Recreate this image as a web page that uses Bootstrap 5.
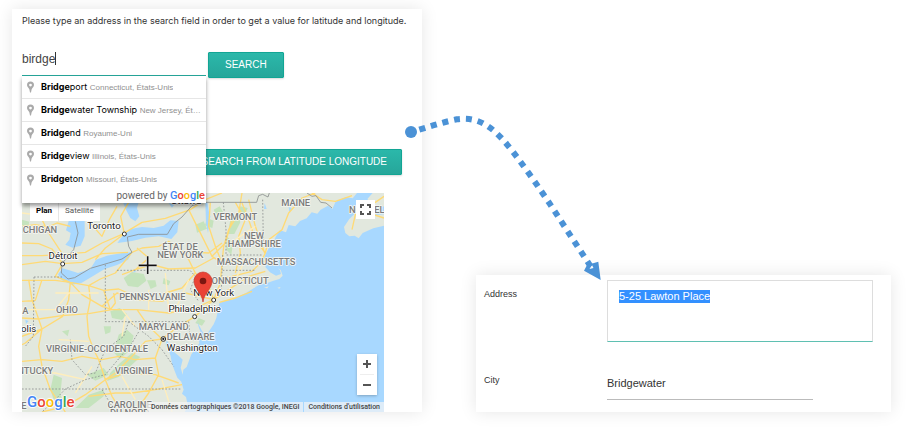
<!DOCTYPE html>
<html lang="en">
<head>
<meta charset="utf-8">
<meta name="viewport" content="width=device-width, initial-scale=1">
<title>Address search</title>
<link href="https://cdn.jsdelivr.net/npm/bootstrap@5.3.0/dist/css/bootstrap.min.css" rel="stylesheet">
<style>
  body { font-family: "Liberation Sans", Arial, sans-serif; font-size: 10px; line-height: 12px; color: #333; background: #fff; }
  .stage { display: grid; grid-template-columns: 410fr 415fr; column-gap: 54px; padding: 9px 29px 17px 12px; }
  .panel { min-width: 0; background: #fff; box-shadow: 0 0 16px rgba(0, 0, 0, .1); }
  .finder { padding: 6px 10px 0; }
  .hint { margin-bottom: 15px; font-family: Inter, sans-serif; font-size: 9px; white-space: nowrap; }
  .search-box { width: 184px; margin-bottom: 2px; }
  .search-input { width: 100%; height: 34px; border: 0; border-bottom: 1px solid #26a69a; border-radius: 0; padding: 0; outline: 0; font-size: 12px; color: #444;
    background: linear-gradient(#333, #333) 33px 10px / 1px 13px no-repeat; }
  .btn-teal { --bs-btn-color: #fff; --bs-btn-hover-color: #fff; --bs-btn-hover-bg: #26a69a; --bs-btn-border-color: #12a594; --bs-btn-border-radius: 1px;
    --bs-btn-font-size: 10px; --bs-btn-line-height: 14px; --bs-btn-padding-y: 5px; --bs-btn-padding-x: 16px;
    background: linear-gradient(#2bb8aa, #26a69a); box-shadow: 0 1px 2px rgba(0, 0, 0, .15); }
  .go { margin-left: 2px; }
  .from-coords { margin: 71px 10px 18px 0; --bs-btn-padding-x: 14px; }
  .suggest { position: absolute; z-index: 5; top: 100%; left: 0; right: 0; background: #fff; box-shadow: 0 3px 4px rgba(0, 0, 0, .4); }
  .suggest-item { height: 23px; padding: 0 4px; border-bottom: 1px solid #e6e6e6; font-family: Inter, sans-serif; font-size: 9px; line-height: 22px; color: #000; }
  .suggest-item:nth-child(5) { border-bottom: 0; }
  .suggest-item svg { width: 9px; height: 12px; margin-right: 6px; }
  .suggest-item small { font-family: "Liberation Sans", Arial, sans-serif; font-size: 8px; color: #909090; }
  .powered { height: 12px; line-height: 10px; padding-right: 1px; font-family: Roboto, sans-serif; color: #666; }
  .powered b { font-size: 11px; font-weight: 500; }
  .g-blue { color: #4285f4; } .g-red { color: #ea4335; } .g-yellow { color: #fbbc05; } .g-green { color: #34a853; }
  .map { margin-right: 28px; font-family: Roboto, sans-serif; overflow: hidden; }
  .map-canvas { display: block; width: 100%; height: 219px; }
  .map-btn { border: 0; background: #fff; color: #555; padding: 0; }
  .map-type { left: 8px; top: 8px; height: 20px; font-size: 8px; }
  .map-type .map-btn { padding: 0 6px; }
  .map-type .map-btn:first-child { font-weight: 700; color: #000; border-right: 1px solid #e6e6e6; }
  .map-full { right: 9px; top: 7px; width: 19px; height: 19px; }
  .map-zoom { right: 7px; bottom: 17px; width: 20px; background: #fff; border-radius: 1px; box-shadow: 0 1px 3px rgba(0, 0, 0, .25); }
  .map-zoom .map-btn { height: 20px; }
  .map-zoom hr { margin: 0 3px; color: #bbb; }
  .map-legal { right: 0; bottom: 0; height: 10px; font-size: 7px; font-weight: 500; line-height: 10px; white-space: nowrap; }
  .map-legal > * { background: rgba(245, 245, 245, .7); padding: 0 4px; color: #444; text-decoration: none; }
  .map-legal > a { margin-left: 1px; }
  .map-brand { left: 5px; bottom: 1px; font-size: 15px; font-weight: 500; line-height: 18px; text-shadow: 0 0 1px #fff, 1px 0 1px #fff, -1px 0 1px #fff, 0 1px 1px #fff, 0 -1px 1px #fff; }
  .record { padding: 5px 18px 12px 8px; font-size: 11px; }
  .field { display: grid; grid-template-columns: 123px 1fr; }
  .field label { font-size: 9px; padding-top: 8px; }
  .address { display: block; width: 100%; height: 62px; padding: 9px 11px; border: 1px solid #ddd; border-bottom-color: #5fc0b2; border-radius: 0; outline: 0; resize: none; line-height: 13px; color: #333; }
  .address::selection { background: #3390ff; color: #fff; }
  .city-row { margin-top: 24px; }
  .city { width: 206px; height: 34px; padding: 0; border: 0; border-bottom: 1px solid #bbb; border-radius: 0; outline: 0; color: #333; }
  .arrow { position: absolute; left: 0; top: 0; width: 920px; height: 429px; pointer-events: none; z-index: 6; }
</style>
</head>
<body>
<svg class="d-none" aria-hidden="true">
  <symbol id="pin" viewBox="0 0 9 12"><path fill="#aaa" fill-rule="evenodd" d="M4.500 .5A3.500 3.500 0 0 0 1 4c0 2 1.700 2.600 2.400 4.500L4 11.500h1l.6-3C6.300 6.600 8 6 8 4A3.500 3.500 0 0 0 4.500.5Zm0 2.200a1.400 1.400 0 1 1 0 2.800 1.400 1.400 0 0 1 0-2.800Z"/></symbol>
</svg>
<main class="stage position-relative">
  <section class="panel finder">
    <p class="hint"><label for="q">Please type an address in the search field in order to get a value for latitude and longitude.</label></p>
    <div class="d-flex align-items-end">
      <div class="search-box position-relative">
        <input class="search-input d-block" id="q" type="text" value="birdge" autocomplete="off">
        <div class="suggest">
          <div class="suggest-item d-flex align-items-center"><svg class="flex-shrink-0"><use href="#pin"/></svg><span class="text-truncate"><b>Bridge</b>port <small>Connecticut, États-Unis</small></span></div>
          <div class="suggest-item d-flex align-items-center"><svg class="flex-shrink-0"><use href="#pin"/></svg><span class="text-truncate"><b>Bridge</b>water Township <small>New Jersey, Ét…</small></span></div>
          <div class="suggest-item d-flex align-items-center"><svg class="flex-shrink-0"><use href="#pin"/></svg><span class="text-truncate"><b>Bridge</b>nd <small>Royaume-Uni</small></span></div>
          <div class="suggest-item d-flex align-items-center"><svg class="flex-shrink-0"><use href="#pin"/></svg><span class="text-truncate"><b>Bridge</b>view <small>Illinois, États-Unis</small></span></div>
          <div class="suggest-item d-flex align-items-center"><svg class="flex-shrink-0"><use href="#pin"/></svg><span class="text-truncate"><b>Bridge</b>ton <small>Missouri, États-Unis</small></span></div>
          <div class="powered text-end">powered by <b><span class="g-blue">G</span><span class="g-red">o</span><span class="g-yellow">o</span><span class="g-blue">g</span><span class="g-green">l</span><span class="g-red">e</span></b></div>
        </div>
      </div>
      <button class="btn btn-teal go" type="button">SEARCH</button>
    </div>
    <div class="d-flex justify-content-end"><button class="btn btn-teal from-coords" type="button">SEARCH FROM LATITUDE LONGITUDE</button></div>

    <div class="map position-relative">
      <svg class="map-canvas" viewBox="0 0 1086 657" preserveAspectRatio="xMidYMid slice" role="img" aria-label="Map">
        <rect width="1086" height="657" fill="#e2e8de"/>
        <!-- forests -->
        <g fill="#c5e3bd">
          <path d="M305 255l25-18 35 6 8 20-25 20-30-4zM375 262l25 0 4 18-18 8zM425 255l20 10-5 12-18-5zM265 355l28-10 22 18-15 18-30-6zM245 400l22 0-2 18-15 6zM290 425l25-15 20 18-12 45-30 25-18-20zM330 480l25 12-65 60-35 12 10-25 30-30zM195 545l50-20 15 20-40 18zM245 590l-45 15-40 40 40 0 45-35zM95 545l25 10-5 50 15 30-30 0-15-45zM120 415l22-5-5 20zM575 50l18-10 12 20-20 12zM520 95l25-10 10 22-30 12zM555 75l20 8-4 22-22-8zM655 40l22 5-10 25-18 0zM625 80l25-12 5 20-18 35-20 0zM615 130l18 20-5 35-15-15zM530 375l20 8-10 15-20-8zM0 80l22 6-4 18-18 0z"/>
        </g>
        <!-- ocean and lakes -->
        <g fill="#a8d8ff">
          <path d="M1086 0H1005L992 16 972 12 950 22 940 28 931 48 918 38 896 50 886 62 869 58 854 76 834 84 820 100 800 96 792 118 774 112 762 130 754 146 744 160 732 180 726 196 736 206 730 222 744 238 762 248 777 243 774 232 768 226 776 231 782 248 772 258 752 264 736 270 716 274 686 288 654 300 618 318 592 331 588 350 583 375 575 394 563 412 551 426 540 414 532 398 526 386 530 402 536 418 540 430 529 436 532 450 523 466 508 484 502 500 494 522 484 530 482 545 476 524 482 500 470 488 457 478 448 460 434 442 431 456 440 470 446 490 450 512 458 534 466 554 478 566 485 590 480 602 492 612 498 640 488 657H1086Z"/>
          <path d="M145 28L132 60 140 85 132 112 146 120 142 140 130 155 152 164 176 158 188 130 188 28ZM303 28L312 50 325 75 340 85 352 70 345 45 350 28ZM286 150L302 128 326 108 360 102 395 105 425 98 445 82 470 84 466 118 448 138 410 130 370 134 330 144ZM108 244L122 226 142 232 168 240 205 228 222 200 255 188 300 180 330 178 318 200 285 216 248 228 212 250 178 270 150 275 120 262ZM550 28L556 28 564 75 558 120 552 90Z"/>
          <path d="M440 30l18 4-8 10zM455 20l10 10-14 4zM560 60l6 12-8 8zM800 42l10 4-8 12zM728 30l6 18-8 0zM690 70l8 4-6 10zM10 380l10 4-8 8zM60 530l10 4-10 5zM335 230l8 4-8 5z"/>
        </g>
        <!-- islands and peninsulas -->
        <g fill="#e2e8de">
          <path d="M966 102L982 78 998 62 1008 50 1040 56 1062 66 1086 64V98L1054 106 1022 120 1010 136 998 128 982 130 970 120ZM1036 18L1052 0H1086V40L1062 48ZM592 324L620 306 660 292 704 280 672 300 630 320ZM726 284l14-4-4 6zM766 284l10-2-4 5z"/>
        </g>
        <!-- roads -->
        <g fill="none" stroke="#ffda75" stroke-width="4" stroke-linejoin="round">
          <path d="M0 150L50 152 90 168 122 212 100 250 145 268 200 278 245 292 290 288 345 312M0 188H60L122 184 190 178 240 150 300 124 360 88 430 76 505 50 550 20 600 0M0 215L70 205 122 212M122 212L180 208 240 182 318 178M30 28L60 80 80 120 122 184M60 110L105 90 145 100M0 100L40 95 70 100M200 85L240 130 262 80 285 40M307 122L296 70 320 28M307 122L250 165 220 200M330 178L360 165 410 160 440 145 480 175 560 180 600 150M200 278L235 258 280 240 330 178M340 230L390 215 440 228 520 225 575 195M345 165L380 195 340 230 300 245M0 262L60 262 100 262 145 268M0 325L40 322 60 260M0 375L50 378 120 368 200 362 270 350 345 350 440 360 520 345 575 320M145 268L140 320 122 370 60 408 0 430M145 268L180 305 240 340 270 350M200 278L205 320 195 370 200 430 215 470 230 500 250 560M60 408L30 320 20 260M60 408L50 460 60 520 85 590 130 657M60 408L10 450 0 455M0 505L60 500 120 505 180 490 240 500 290 490 340 500 400 495M240 340L285 300 340 320 420 325 490 300 575 320M245 292L265 350 280 330 275 300M345 350L380 400 420 438 400 495 410 545 380 600 340 657M420 438L470 400 520 370 575 320 620 290 680 250 730 235M420 438L370 445 330 490 280 540 250 560 190 605 130 640 60 657M250 560L270 610 300 657M250 560L310 540 400 545 470 570M200 610L280 600 330 600 400 590 480 575M575 320L560 280 520 240 500 200 480 175M575 320L595 270 600 210 580 160 560 100 565 28M600 210L670 200 730 205M600 210L570 190 530 110 500 50M640 28L670 80 650 130 655 180 640 240M660 0L650 60 620 110 605 160 600 210M730 180L715 210 690 235 630 250 580 260M730 180L740 140 780 110 800 60 840 15 880 0M730 180L700 140 680 80 660 30M680 20L700 100 728 180M520 240L480 285 430 300M570 190L610 150 630 80M1030 28L1060 28 1086 10M990 110L1000 65 1040 60 1086 75M870 0L900 20 940 25 990 8M592 328L640 315 690 295"/>
        </g>
        <path fill="none" stroke="#ffeebc" stroke-width="4" d="M0 60L80 70M0 350L100 350 140 300M100 300L230 300M0 540L100 540 190 560M340 400L300 350M380 290V350M430 240L440 350M310 370L300 430M500 260L460 350M110 440L200 445M210 520L160 600M300 550L340 620M420 560L450 657M670 200L640 260M700 100L640 140"/>
        <!-- borders -->
        <g fill="none" stroke="#8b8f8f" stroke-width="2.500">
          <path d="M160 85L168 120 155 170 120 212 118 240 138 258 158 254 205 226 260 210 300 198 330 178 320 160 316 132 350 124 436 124 455 92 480 72 510 38 540 28H704L710 8 722 4 738 12 742 0M855 0L870 10 882 8 896 28 912 30 930 45"/>
          <path stroke-dasharray="5 5" d="M36 252H120M36 252L34 430 10 460M250 215V386H500M285 232H504L520 250 505 290 530 325M604 28L612 110 612 186H720M722 20L724 150M602 186L598 290M602 232H700M320 386L305 430 250 470 220 540 190 545 150 500 145 440M320 386L380 430 420 470M360 400L330 450 250 545 190 560 130 588M0 588H480M500 386L505 440H525M130 588L100 620 60 657M420 470L455 520M240 590L280 657"/>
        </g>
        <!-- cities and regions -->
        <g font-size="28" font-weight="500" fill="#7b7b7b" stroke="#f4f6f2" stroke-width="5" paint-order="stroke" stroke-linejoin="round" text-anchor="middle">
          <text x="50" y="121">ICHIGAN</text><text x="474" y="171">ÉTAT DE</text><text x="475" y="196">NEW YORK</text>
          <text x="391" y="322">PENNSYLVANIE</text><text x="135" y="359">OHIO</text><text x="6" y="363">IA</text><text x="425" y="410">MARYLAND</text>
          <text x="506" y="442">DELAWARE</text><text x="225" y="476">VIRGINIE-OCCIDENTALE</text><text x="40" y="544">NTUCKY</text>
          <text x="335" y="544">VIRGINIE</text><text x="323" y="645">CAROLINE</text><text x="323" y="668">DU NORD</text><text x="6" y="648">E</text>
          <text x="640" y="82">VERMONT</text><text x="821" y="38">MAINE</text><text x="696" y="139">NEW</text><text x="697" y="163">HAMPSHIRE</text>
          <text x="702" y="216">MASSACHUSETTS</text><text x="645" y="273">CONNECTICUT</text><text x="1050" y="60">NOUVELLE</text>
        </g>
        <g font-size="29" fill="#222" stroke="#fff" stroke-width="5" paint-order="stroke" stroke-linejoin="round" text-anchor="middle">
          <text x="246" y="109">Toronto</text><text x="123" y="199">Détroit</text><text x="492" y="33">Ottawa</text><text x="575" y="309">New York</text>
          <text x="518" y="358">Philadelphie</text><text x="511" y="474">Washington</text><text x="20" y="417">olis</text>
        </g>
        <g fill="#fff" stroke="#333" stroke-width="3"><circle cx="307" cy="123" r="6"/><circle cx="122" cy="213" r="6"/><circle cx="575" cy="321" r="6"/><circle cx="518" cy="371" r="6"/><circle cx="424" cy="438" r="7"/></g>
        <circle cx="424" cy="438" r="3.500" fill="#222"/>
        <path d="M377 190V243M350 217H404" stroke="#fff" stroke-width="9"/>
        <path d="M377 190V243M350 217H404" stroke="#111" stroke-width="5"/>
        <path d="M543 327C540 300 516 288 516 264A27 27 0 0 1 570 264C570 288 546 300 543 327Z" fill="#ea4335" stroke="#c5352a" stroke-width="2"/><circle cx="543" cy="264" r="10" fill="#7b1710"/>
      </svg>
      <div class="map-type position-absolute d-flex"><button class="map-btn" type="button">Plan</button><button class="map-btn" type="button">Satellite</button></div>
      <button class="map-btn map-full position-absolute d-flex align-items-center justify-content-center" type="button" aria-label="Fullscreen"><svg width="13" height="13" viewBox="0 0 13 13" fill="none" stroke="#555" stroke-width="2"><path d="M2 5V2H5M8 2H11V5M11 8V11H8M5 11H2V8"/></svg></button>
      <div class="map-zoom position-absolute d-flex flex-column">
        <button class="map-btn d-flex align-items-center justify-content-center" type="button" aria-label="Zoom in"><svg width="8" height="8" viewBox="0 0 8 8" stroke="#555" stroke-width="2"><path d="M4 0V8M0 4H8"/></svg></button>
        <hr>
        <button class="map-btn d-flex align-items-center justify-content-center" type="button" aria-label="Zoom out"><svg width="8" height="8" viewBox="0 0 8 8" stroke="#555" stroke-width="2"><path d="M0 4H8"/></svg></button>
      </div>
      <div class="map-brand position-absolute"><span class="g-blue">G</span><span class="g-red">o</span><span class="g-yellow">o</span><span class="g-blue">g</span><span class="g-green">l</span><span class="g-red">e</span></div>
      <div class="map-legal position-absolute d-flex"><span>Données cartographiques ©2018 Google, INEGI</span><a href="#">Conditions d'utilisation</a></div>
    </div>
  </section>

  <section class="panel record align-self-end">
    <div class="field"><label for="address">Address</label><textarea class="address" id="address">5-25 Lawton Place</textarea></div>
    <div class="field city-row"><label for="city">City</label><input class="city" id="city" type="text" value="Bridgewater"></div>
  </section>

  <svg class="arrow" viewBox="0 0 920 429" aria-hidden="true">
    <circle cx="411" cy="132" r="6" fill="#4b92d6"/>
    <path d="M419.300 129.700Q445 121.500 457 119.300C477 116.500 491 125 507.700 145.300C520 160 540 189 549.700 203.700L591 267" fill="none" stroke="#4b92d6" stroke-width="6" stroke-dasharray="6 6"/>
    <path fill="#4b92d6" fill-rule="evenodd" d="M600.700 280L584 270.700 587 265 598.300 261.700ZM589.500 269l4-1-1.500-3z"/>
  </svg>
</main>
<script src="https://cdn.jsdelivr.net/npm/bootstrap@5.3.0/dist/js/bootstrap.bundle.min.js"></script>
<script>
  const address = document.getElementById('address');
  address.focus({ preventScroll: true });
  address.select();
</script>
</body>
</html>
